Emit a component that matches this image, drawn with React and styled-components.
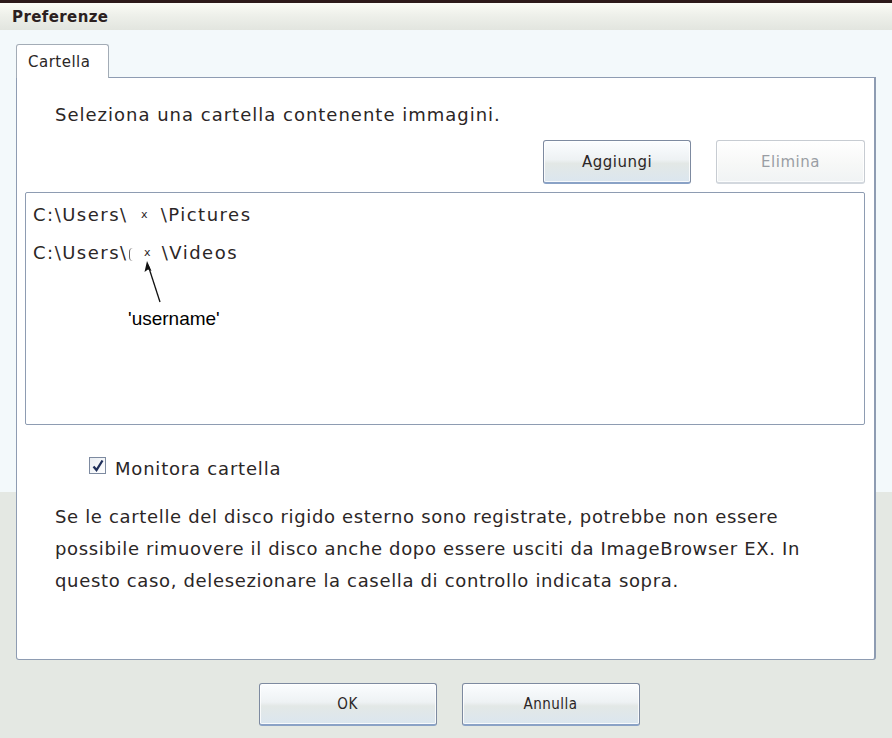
import React from "react";
import styled, { createGlobalStyle } from "styled-components";

const GlobalStyle = createGlobalStyle`
  html, body { margin: 0; padding: 0; }
  body { font-family: "DejaVu Sans", Verdana, sans-serif; color: #2b2626; }
`;

const Window = styled.div`
  width: 892px;
  height: 738px;
  display: flex;
  flex-direction: column;
  overflow: hidden;
  background: linear-gradient(to bottom, #f3f9fb 0, #f3f9fb 492px, #e4e8e3 492px, #e4e8e3 100%);
`;

const TopStrip = styled.div`
  height: 3px;
  background: #2d1a1a;
`;

const TitleBar = styled.div`
  height: 27px;
  display: flex;
  align-items: center;
  padding-left: 12px;
  font-size: 15px;
  letter-spacing: 0.4px;
  font-weight: bold;
  color: #2b2020;
  background: linear-gradient(to bottom, #fbfcf6 0%, #eef0ea 45%, #e2e5df 100%);
`;

const Content = styled.div`
  padding: 14px 16px 0 16px;
`;

const TabStrip = styled.div`
  display: flex;
  height: 33px;
`;

const Tab = styled.div`
  width: 93px;
  box-sizing: border-box;
  border: 1px solid #a3acb6;
  border-bottom: none;
  border-radius: 3px 3px 0 0;
  background: #ffffff;
  font-size: 15px;
  letter-spacing: 0.5px;
  padding: 8px 0 0 11px;
  position: relative;
  z-index: 1;
  margin-bottom: -1px;
`;

const Panel = styled.div`
  height: 583px;
  box-sizing: border-box;
  border: 1px solid #8e9cb2;
  border-right: 2px solid #8e9cb2;
  border-radius: 0 0 3px 3px;
  background: #ffffff;
  padding: 25px 9px 0 8px;
  display: flex;
  flex-direction: column;
`;

const Intro = styled.div`
  font-size: 18px;
  letter-spacing: 1px;
  line-height: 24px;
  padding-left: 30px;
`;

const ButtonRow = styled.div`
  display: flex;
  justify-content: flex-end;
  gap: 25px;
  margin-top: 13px;
`;

const Button = styled.button`
  width: ${(p) => p.$w}px;
  height: ${(p) => p.$h}px;
  box-sizing: border-box;
  font-family: "DejaVu Sans", Verdana, sans-serif;
  font-size: 15px;
  letter-spacing: 0.5px;
  color: ${(p) => (p.disabled ? "#9a9ea4" : "#2b2626")};
  border: 1px solid ${(p) => (p.disabled ? "#c7ccd2" : "#7d8aa0")};
  border-bottom: 2px solid ${(p) => (p.disabled ? "#d3d8de" : "#8aa2c6")};
  border-radius: 3px;
  background: ${(p) =>
    p.disabled
      ? "linear-gradient(to bottom, #ffffff 0%, #f7f8f7 55%, #f0f3f4 100%)"
      : "linear-gradient(to bottom, #fbfdff 0%, #eef2f4 45%, #e3e8e6 55%, #dbe6ef 100%)"};
  box-shadow: inset 0 0 0 1px rgba(255, 255, 255, 0.8);
  padding: 0;
`;

const ListBox = styled.div`
  position: relative;
  margin-top: 8px;
  height: 233px;
  box-sizing: border-box;
  border: 1px solid #8e9cb2;
  border-radius: 2px;
  padding: 10px 0 0 7px;
  display: flex;
  flex-direction: column;
  gap: 14px;
`;

const PathItem = styled.div`
  font-size: 18px;
  letter-spacing: 1.5px;
  line-height: 24px;
  display: flex;
  align-items: center;
  white-space: pre;
`;

const Sliver = styled.span`
  display: inline-block;
  width: 4px;
  height: 13px;
  margin-top: 2px;
  border-left: 1.5px solid #6a6666;
  border-radius: 6px 0 0 6px;
  box-sizing: border-box;
  margin-left: 1px;
`;

const Hidden = styled.span`
  display: inline-block;
  width: ${(p) => p.$w}px;
  font-size: 11px;
  letter-spacing: 0;
  text-align: center;
`;

const Arrow = styled.svg`
  position: absolute;
  left: 110px;
  top: 0;
`;

const Note = styled.div`
  position: absolute;
  left: 102px;
  top: 115px;
  font-family: "Liberation Sans", Arial, sans-serif;
  font-size: 19px;
  color: #000;
`;

const CheckRow = styled.label`
  display: flex;
  align-items: center;
  gap: 9px;
  margin: 33px 0 0 64px;
  font-size: 18px;
  letter-spacing: 0.8px;
`;

const Box = styled.span`
  width: 17px;
  height: 17px;
  box-sizing: border-box;
  border: 1px solid #7d8aa0;
  background: linear-gradient(to bottom right, #e9edf2, #ffffff);
  display: flex;
  align-items: center;
  justify-content: center;
  margin-top: -6px;
`;

const Help = styled.p`
  margin: 22px 0 0 30px;
  font-size: 18px;
  letter-spacing: 0.66px;
  line-height: 32px;
  white-space: nowrap;
`;

const Footer = styled.div`
  display: flex;
  justify-content: center;
  gap: 25px;
  padding: 23px 0 0 6px;
`;

const FooterButton = styled(Button)`
  font-family: "DejaVu Sans Condensed", "DejaVu Sans", sans-serif;
`;

export default function App() {
  return (
    <>
      <GlobalStyle />
      <Window>
        <TopStrip />
        <TitleBar>Preferenze</TitleBar>
        <Content>
          <TabStrip>
            <Tab>Cartella</Tab>
          </TabStrip>
          <Panel>
            <Intro>Seleziona una cartella contenente immagini.</Intro>
            <ButtonRow>
              <Button $w={148} $h={44}>Aggiungi</Button>
              <Button $w={149} $h={44} disabled>Elimina</Button>
            </ButtonRow>
            <ListBox>
              <PathItem>
                C:\Users\<Hidden $w={33}>x</Hidden>\Pictures
              </PathItem>
              <PathItem>
                C:\Users\<Sliver /><Hidden $w={29}>x</Hidden>\Videos
              </PathItem>
              <Arrow width="30" height="112" viewBox="0 0 30 112">
                <line x1="24" y1="109" x2="12" y2="72" stroke="#111" strokeWidth="1.3" />
                <path d="M11 68 L8.5 79 L12 76.5 L15.5 78 Z" fill="#111" />
              </Arrow>
              <Note>'username'</Note>
            </ListBox>
            <CheckRow>
              <Box>
                <svg width="14" height="14" viewBox="0 0 14 14">
                  <path d="M2.5 7.5 L5.5 11 L11.5 1.5" fill="none" stroke="#1f2f5a" strokeWidth="2.3" />
                </svg>
              </Box>
              Monitora cartella
            </CheckRow>
            <Help>
              Se le cartelle del disco rigido esterno sono registrate, potrebbe non essere
              <br />
              possibile rimuovere il disco anche dopo essere usciti da ImageBrowser EX. In
              <br />
              questo caso, delesezionare la casella di controllo indicata sopra.
            </Help>
          </Panel>
        </Content>
        <Footer>
          <FooterButton $w={178} $h={43}>OK</FooterButton>
          <FooterButton $w={178} $h={43}>Annulla</FooterButton>
        </Footer>
      </Window>
    </>
  );
}
